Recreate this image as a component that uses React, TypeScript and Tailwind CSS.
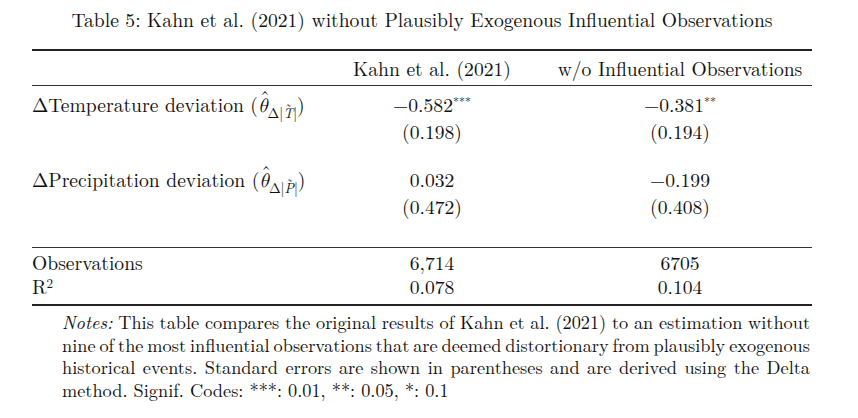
import React from 'react';

// theta-hat with a subscripted Delta|X~|
const Theta = ({ sym }: { sym: string }) => (
  <span className="inline-flex items-baseline">
    <span className="relative italic">
      θ
      <span className="absolute left-[2px] top-[-7px] not-italic">ˆ</span>
    </span>
    <span className="relative top-[6px] text-[14px]">
      Δ|
      <span className="relative italic">
        {sym}
        <span className="absolute left-[2px] top-[-6px] not-italic">˜</span>
      </span>
      |
    </span>
  </span>
);

const Row = ({ label, a, b }: { label: React.ReactNode; a: React.ReactNode; b: React.ReactNode }) => (
  <div className="grid grid-cols-[313px_174px_1fr] leading-[25px]">
    <div>{label}</div>
    <div className="text-center">{a}</div>
    <div className="pl-[29px] text-center">{b}</div>
  </div>
);

export default function App() {
  return (
    <div className="w-[858px] h-[418px] bg-white text-[#111] text-[19.6px] font-['Latin_Modern_Roman','Latin_Modern_Math','Liberation_Serif',serif]">
      <div className="flex flex-col pl-[32px] pr-[46px]">
        <div className="mt-[7px] text-center leading-[24px]">
          Table 5: Kahn et al. (2021) without Plausibly Exogenous Influential Observations
        </div>

        <div className="mt-[18px] h-[2px] bg-[#222]" />
        <div className="grid grid-cols-[313px_174px_1fr] leading-[34px]">
          <div />
          <div className="text-center">Kahn et al. (2021)</div>
          <div className="pl-[29px] text-center">w/o Influential Observations</div>
        </div>
        <div className="h-[1px] bg-[#333]" />

        <div className="pt-[6px]">
          <Row
            label={<>ΔTemperature deviation (<Theta sym="T" />)</>}
            a={<>−0.582<sup className="text-[12px]">***</sup></>}
            b={<>−0.381<sup className="text-[12px]">**</sup></>}
          />
          <Row label="" a="(0.198)" b="(0.194)" />
          <div className="h-[23px]" />
          <Row
            label={<>ΔPrecipitation deviation (<Theta sym="P" />)</>}
            a="0.032"
            b="−0.199"
          />
          <Row label="" a="(0.472)" b="(0.408)" />
        </div>

        <div className="mt-[28px] h-[1px] bg-[#333]" />
        <div className="pt-[2px]">
          <div className="grid grid-cols-[313px_174px_1fr] leading-[24px]">
            <div>Observations</div>
            <div className="text-center">6,714</div>
            <div className="pl-[29px] text-center">6705</div>
          </div>
          <div className="grid grid-cols-[313px_174px_1fr] leading-[24px]">
            <div>
              R<sup className="text-[13px]">2</sup>
            </div>
            <div className="text-center">0.078</div>
            <div className="pl-[29px] text-center">0.104</div>
          </div>
        </div>
        <div className="mt-[6px] h-[2px] bg-[#222]" />

        <div className="mt-[4px] ml-[30px] mr-[2px] text-[18.3px] leading-[22.6px] [word-spacing:-3px]">
          <div className="whitespace-nowrap text-justify [text-align-last:justify]">
            <i>Notes:</i> This table compares the original results of Kahn et al. (2021) to an estimation without
          </div>
          <div className="whitespace-nowrap text-justify [text-align-last:justify]">
            nine of the most influential observations that are deemed distortionary from plausibly exogenous
          </div>
          <div className="whitespace-nowrap text-justify [text-align-last:justify]">
            historical events. Standard errors are shown in parentheses and are derived using the Delta
          </div>
          <div className="whitespace-nowrap [word-spacing:0px]">method. Signif. Codes: ***: 0.01, **: 0.05, *: 0.1</div>
        </div>
      </div>
    </div>
  );
}
